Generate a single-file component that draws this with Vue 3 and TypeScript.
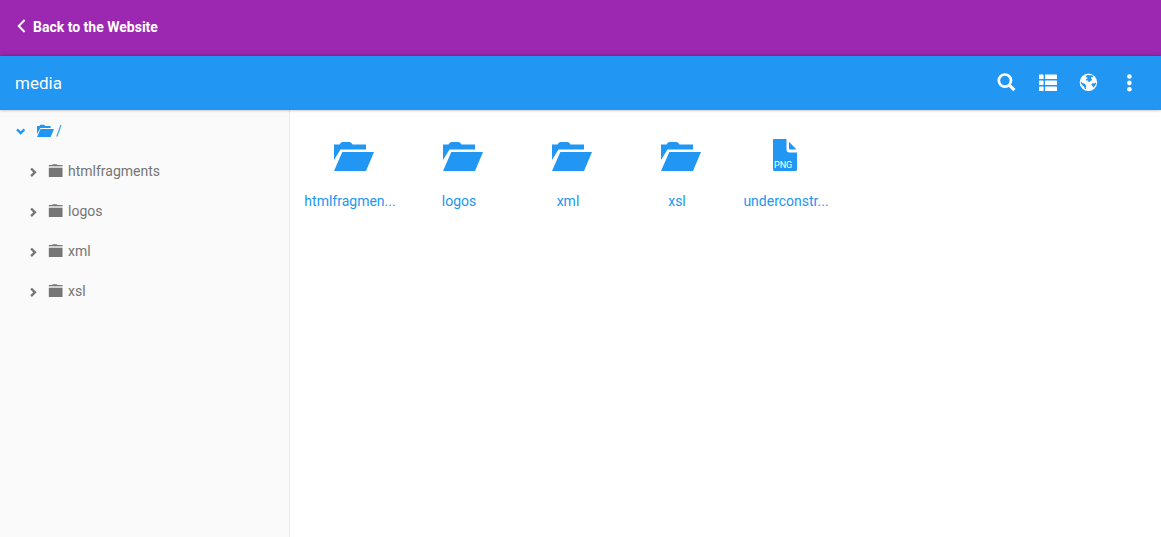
<script setup lang="ts">
interface Entry {
  name: string
  label: string
  kind: 'folder' | 'png'
}

const tree: string[] = ['htmlfragments', 'logos', 'xml', 'xsl']
const entries: Entry[] = [
  { name: 'htmlfragments', label: 'htmlfragmen...', kind: 'folder' },
  { name: 'logos', label: 'logos', kind: 'folder' },
  { name: 'xml', label: 'xml', kind: 'folder' },
  { name: 'xsl', label: 'xsl', kind: 'folder' },
  { name: 'underconstruction', label: 'underconstr...', kind: 'png' },
]
</script>

<template>
  <div class="page">
    <header class="site-bar">
      <a href="#" class="back">
        <svg class="back-icon" width="9" height="14" viewBox="0 0 9 14" aria-hidden="true">
          <path d="M7.6 1 1.700 7l5.900 6" fill="none" stroke="currentColor" stroke-width="1.9" />
        </svg>
        <span>Back to the Website</span>
      </a>
    </header>

    <div class="toolbar">
      <h1 class="title">media</h1>
      <div class="actions">
        <button type="button" class="action" aria-label="Search">
          <svg width="20" height="20" viewBox="0 0 20 20" aria-hidden="true">
            <circle cx="8.9" cy="7.6" r="6.100" fill="none" stroke="currentColor" stroke-width="2.7" />
            <path d="m13.300 12.100 5.100 5" stroke="currentColor" stroke-width="3.2" />
          </svg>
        </button>
        <button type="button" class="action" aria-label="List view">
          <svg width="20" height="20" viewBox="0 0 20 20" fill="currentColor" aria-hidden="true">
            <rect x="2" y="1.500" width="4.600" height="4.600" rx=".6" /><rect x="8" y="1.500" width="12" height="4.600" rx=".6" />
            <rect x="2" y="7.500" width="4.600" height="4.600" rx=".6" /><rect x="8" y="7.500" width="12" height="4.600" rx=".6" />
            <rect x="2" y="13.500" width="4.600" height="4.600" rx=".6" /><rect x="8" y="13.500" width="12" height="4.600" rx=".6" />
          </svg>
        </button>
        <button type="button" class="action" aria-label="Language">
          <svg width="20" height="20" viewBox="0 0 20 20" aria-hidden="true">
            <circle cx="10.400" cy="9.300" r="8.7" fill="currentColor" />
            <g class="land">
              <path d="m9.200 2.300 1.200-.5 1.300.6 1.600-.5 2.100 1-.8 1.400-1.300-.3-.4 1.500 1.100.3-.2 1.800-1.400.2-.7 1.300-1.300-.4-.5-1.200-1.800.1-.2-1.300 1.600-.7-.2-1.200-1.400-.3.200-1.300Z" />
              <path d="m2.700 8.300 1.700 1.700 2.300.8 1.500 1.500-.4 1.600.5 2.400-1.700-.8-.6-1.900-1.700-1.400-1.500-2Z" />
              <path d="m14.700 10 1.900.5 1.200-1.300.2 1.700-1.200 2-1.700 1.800-.6-1.700-1.100-1.500Z" />
            </g>
          </svg>
        </button>
        <button type="button" class="action" aria-label="More options">
          <svg width="20" height="20" viewBox="0 0 20 20" fill="currentColor" aria-hidden="true">
            <circle cx="10.400" cy="3.500" r="2.3" /><circle cx="10.400" cy="9.900" r="2.3" /><circle cx="10.400" cy="16.300" r="2.3" />
          </svg>
        </button>
      </div>
    </div>

    <div class="body">
      <nav class="sidebar" aria-label="Folders">
        <a href="#" class="node root">
          <svg width="10" height="8" viewBox="0 0 10 8" aria-hidden="true">
            <path d="m1 2.300 3.700 3.700 3.700-3.700" fill="none" stroke="currentColor" stroke-width="2.4" />
          </svg>
          <svg class="root-folder" width="17" height="14" viewBox="0 0 40 32" fill="currentColor" aria-hidden="true">
            <path d="M0 20V4h6q1-3 3-3h7q2 0 3 3h13v5H8L0 23Z" />
            <path d="M8.300 11H40l-8 19H0Z" />
          </svg>
          <span>/</span>
        </a>
        <a v-for="name in tree" :key="name" href="#" class="node child">
          <svg class="caret" width="8" height="10" viewBox="0 0 8 10" aria-hidden="true">
            <path d="m2.100 1.500 3.800 3.800-3.800 3.800" fill="none" stroke="currentColor" stroke-width="2.4" />
          </svg>
          <svg class="folder" width="15" height="14" viewBox="0 0 15 14" fill="currentColor" aria-hidden="true">
            <path d="M4 1 5 .2h3.500L9.500 1h5v1H.800V1Z" />
            <path d="M.800 2H14.500v2H.800Z" opacity=".3" />
            <path d="M.800 4H14.500v9H.800Z" />
          </svg>
          <span>{{ name }}</span>
        </a>
      </nav>

      <main class="files">
        <a v-for="entry in entries" :key="entry.name" href="#" class="file" :title="entry.name">
          <svg v-if="entry.kind === 'folder'" class="big-folder" width="40" height="33" viewBox="0 0 40 33" fill="currentColor" aria-hidden="true">
            <path d="M0 21V5.500h5.500q1-2.500 3-2.500h7q2 0 3 2.500H32v5H6.500L0 21Z" />
            <path d="M8.300 13H40l-8 19H0Z" />
          </svg>
          <svg v-else class="big-file" width="24" height="33" viewBox="0 0 24 33" aria-hidden="true">
            <path d="M1 0h12.500v10.500q0 3 3 3H24v17q0 1.500-1.500 1.500h-21Q0 32 0 30.500V1q0-1 1-1Zm15 2.700 7.500 7.800H17q-1 0-1-1Z" fill="currentColor" />
            <text x="1" y="29" class="badge">PNG</text>
          </svg>
          <span class="label">{{ entry.label }}</span>
        </a>
      </main>
    </div>
  </div>
</template>

<style>
body {
  margin: 0;
  background: #fff;
}
</style>

<style scoped>
.page {
  display: flex;
  flex-direction: column;
  min-height: 100vh;
  font-family: Roboto, "Liberation Sans", sans-serif;
  font-size: 14px;
  line-height: 20px;
}
a {
  color: inherit;
  text-decoration: none;
}
svg {
  display: block;
  flex: none;
}
.site-bar {
  display: flex;
  box-sizing: border-box;
  height: 56px;
  padding: 17px 17px 0;
  background: #9c27b0;
  color: #fff;
}
.back {
  display: flex;
  align-items: flex-start;
  gap: 7px;
  height: 20px;
  font-weight: 700;
}
.back-icon {
  margin-top: 2px;
}
.toolbar {
  display: flex;
  align-items: center;
  justify-content: space-between;
  height: 54px;
  padding: 0 22px 0 15px;
  background: #2196f3;
  color: #fff;
  box-shadow: 0 0 3px rgba(0, 0, 0, 0.35);
  z-index: 1;
}
.title {
  margin: 0;
  font-size: 17px;
  font-weight: 400;
}
.actions {
  display: flex;
  gap: 21px;
}
.action {
  padding: 0;
  border: 0;
  background: none;
  color: inherit;
}
.land {
  fill: #2196f3;
}
.body {
  display: flex;
  flex: 1;
}
.sidebar {
  box-sizing: border-box;
  width: 290px;
  flex: none;
  padding-top: 1px;
  border-right: 1px solid #e8e8e8;
  background: #fafafa;
  color: #757575;
}
.node {
  display: flex;
  align-items: center;
  height: 40px;
}
.root {
  padding-left: 16px;
  color: #2196f3;
}
.root-folder {
  margin: 0 2px 0 11px;
}
.child {
  padding-left: 29px;
}
.caret {
  margin-top: 2px;
}
.folder {
  margin: 0 5px 0 11px;
}
.files {
  display: flex;
  flex: 1;
  flex-wrap: wrap;
  align-content: flex-start;
  gap: 9px;
  padding: 29px 10px 10px;
}
.file {
  width: 100px;
  color: #2196f3;
}
.big-folder {
  margin-left: 34px;
}
.big-file {
  margin-left: 37px;
}
.badge {
  fill: #fff;
  font-size: 9px;
}
.label {
  display: block;
  margin-top: 19px;
  text-align: center;
  white-space: nowrap;
}
</style>
